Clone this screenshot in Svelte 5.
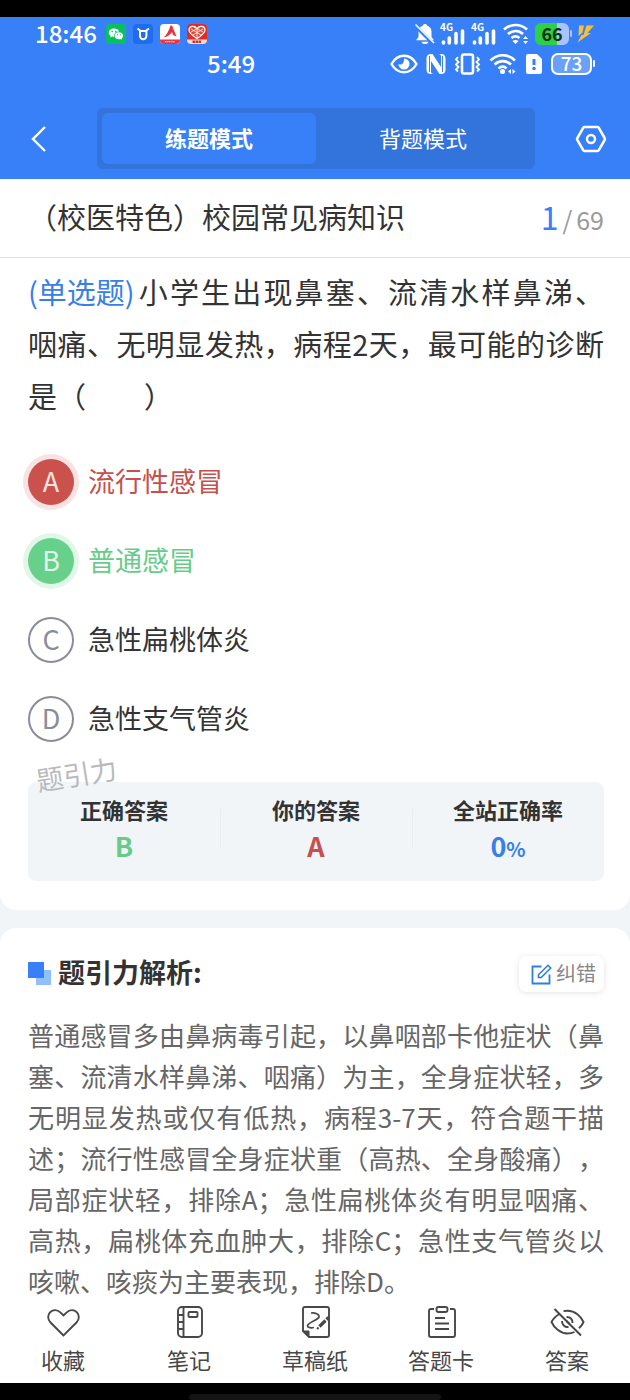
<script>
    let mode = 'practice';

    const title = '（校医特色）校园常见病知识';
    const question = ['小学生出现鼻塞、流清水样鼻涕、', '咽痛、无明显发热，病程2天，最可能的诊断', '是（　　）'];
    const options = [
        { key: 'A', text: '流行性感冒', state: 'wrong' },
        { key: 'B', text: '普通感冒', state: 'right' },
        { key: 'C', text: '急性扁桃体炎', state: '' },
        { key: 'D', text: '急性支气管炎', state: '' }
    ];
    const analysis = [
        '普通感冒多由鼻病毒引起，以鼻咽部卡他症状（鼻',
        '塞、流清水样鼻涕、咽痛）为主，全身症状轻，多',
        '无明显发热或仅有低热，病程3-7天，符合题干描',
        '述；流行性感冒全身症状重（高热、全身酸痛），',
        '局部症状轻，排除A；急性扁桃体炎有明显咽痛、',
        '高热，扁桃体充血肿大，排除C；急性支气管炎以',
        '咳嗽、咳痰为主要表现，排除D。'
    ];
    const tools = [
        { id: 'fav', text: '收藏' },
        { id: 'note', text: '笔记' },
        { id: 'draft', text: '草稿纸' },
        { id: 'card', text: '答题卡' },
        { id: 'answer', text: '答案' }
    ];
</script>

<div class="app">
    <header>
        <div class="notch"></div>
        <div class="status first">
            <span class="time">18:46</span>
            <div class="apps">
                <svg width="20" height="20" viewBox="0 0 20 20">
                    <rect width="20" height="20" rx="4" fill="#07c160" />
                    <path d="M8 4.500c-3 0-5.200 1.900-5.200 4.200 0 1.300.7 2.400 1.900 3.200l-.5 1.600 1.900-1c.6.200 1.200.3 1.900.3-.5-3 1.900-5.400 5.100-5.300C12.600 5.700 10.600 4.500 8 4.500z" fill="#fff" />
                    <path d="M12.900 8.200c-2.500 0-4.400 1.500-4.400 3.500s1.900 3.500 4.400 3.500c.5 0 1-.1 1.500-.2l1.500.8-.4-1.400c1-.7 1.600-1.600 1.600-2.700 0-2-1.900-3.500-4.200-3.500z" fill="#fff" />
                    <g fill="#07c160"><circle cx="6.300" cy="7.600" r=".8" /><circle cx="9.700" cy="7.600" r=".8" /><circle cx="11.500" cy="10.800" r=".6" /><circle cx="14.300" cy="10.800" r=".6" /></g>
                </svg>
                <svg width="20" height="20" viewBox="0 0 20 20">
                    <rect width="20" height="20" rx="4" fill="#1f6cf0" />
                    <path d="M4.500 4.500L7 6.500V12a3.200 3.200 0 0 0 6.400 0V6.500L16 4.500M7 7h6.400" fill="none" stroke="#fff" stroke-width="2" />
                </svg>
                <svg width="20" height="20" viewBox="0 0 20 20">
                    <rect width="20" height="20" rx="4" fill="#fff" />
                    <path d="M0 15.500h20V16a4 4 0 0 1-4 4H4a4 4 0 0 1-4-4z" fill="#ee3440" />
                    <path d="M3.500 13.500C7 11 9 6 10.500 1.500h1.500l4.500 11-3.500-1.500-1-3c-1.500 2.500-4.500 5-8.500 5.500z" fill="#e83442" />
                    <path d="M5 17.700h10" stroke="#fff" stroke-width="1" stroke-dasharray="1.500 .5" />
                </svg>
                <svg width="20" height="20" viewBox="0 0 20 20">
                    <rect width="20" height="20" rx="4" fill="#e52b20" />
                    <path d="M10 14.500C6 12 2 9.500 2 6c0-4 5.500-5 8-1.500C12.500 1 18 2 18 6c0 3.500-4 6-8 8.500z" fill="#e04a38" stroke="#fff" stroke-width="1.200" />
                    <path d="M4 5l10 6M7 3l9 5M16 5L6 11M13 3L4 8M10 4v10" stroke="#fff" stroke-width=".8" />
                    <path d="M0 15.500h20V16a4 4 0 0 1-4 4H4a4 4 0 0 1-4-4z" fill="#fbd9c8" />
                    <path d="M5.500 17.700h9" stroke="#c33" stroke-width="2.400" stroke-dasharray="2.500 .5" />
                </svg>
            </div>
            <div class="signals">
                <svg width="20" height="22" viewBox="0 0 20 22">
                    <path d="M10 1c-1 0-1.700.5-2 1.400C5.200 3.300 3.500 5.700 3.500 8.500V14L1 17.200h18L16.500 14V8.500c0-2.800-1.700-5.200-4.500-6.100C11.700 1.500 11 1 10 1zM6.500 18.700h7c-.5 1.600-1.700 2.300-3.500 2.300s-3-.7-3.500-2.300z" fill="#fff" />
                    <path d="M0 2.500L18.500 21" stroke="#3880f8" stroke-width="3.500" />
                    <path d="M.5 1.500L19 20" stroke="#fff" stroke-width="1.600" />
                </svg>
                {#each [1, 2] as sim}
                    <svg width="26" height="22" viewBox="0 0 26 22">
                        <text x="0" y="8" font-size="10" font-weight="700" fill="#fff">4G</text>
                        <path d="M3.500 20v-1M9.300 20v-5M16 20v-9.500M22.500 20V8" stroke="#fff" stroke-width="3.600" stroke-linecap="round" />
                    </svg>
                {/each}
                <svg width="28" height="22" viewBox="0 0 28 22">
                    <path d="M2 6.500c6.500-6 16.500-6 23 0M6 11c4.500-4 11-4 15 0M9.500 15c2.500-2 5.500-2 8 0" fill="none" stroke="#fff" stroke-width="2.600" />
                    <path d="M10.500 18c2-1.200 4-1.200 6 0l-3 3z" fill="#fff" />
                    <path d="M23.500 13l2.500 3h-5zM23.500 21l2.500-3h-5z" fill="#fff" />
                </svg>
                <span class="battery green">66</span>
                <svg width="18" height="20" viewBox="0 0 18 20">
                    <path d="M2 1.500h5l-1.500 7L1.500 12zM9.500 1.500H17L10.500 9h3.500L.5 18.500l4-7.500h2z" fill="#fbc02d" />
                </svg>
            </div>
        </div>
        <div class="status second">
            <span class="time">5:49</span>
            <div class="signals">
                <svg width="28" height="22" viewBox="0 0 28 22">
                    <path d="M1.500 11C7.500 0 20.500 0 26.500 11 20.500 22 7.500 22 1.500 11z" fill="none" stroke="#fff" stroke-width="2.400" />
                    <path d="M14 5.500a5.500 5.500 0 1 1-5.500 5.500c2 1.500 6 .5 5.500-5.500z" fill="#fff" />
                </svg>
                <svg width="20" height="22" viewBox="0 0 20 22">
                    <path d="M5 1h1.500L15 14V3.500C15 1.800 14 1 12.500 1H15c3 0 4.500 1.500 4.500 4.500v11c0 3-1.500 4.500-4.500 4.500h-1.500L5 8v10.500C5 20.200 6 21 7.500 21H5c-3 0-4.500-1.500-4.500-4.500v-11C.5 2.500 2 1 5 1z" fill="#fff" />
                    <path d="M3.500 3v16M16.500 3v16" stroke="#3880f8" stroke-width="1" />
                </svg>
                <svg width="27" height="22" viewBox="0 0 27 22">
                    <rect x="8" y="1.500" width="11" height="19" rx="2" fill="none" stroke="#fff" stroke-width="2.600" />
                    <path d="M4 4L2 6.500 4.500 9 2 11.500 4.500 14 2 16.500 4 18.500M23 4l2 2.500L22.500 9l2.500 2.500-2.500 2.500 2.500 2.500-2 2" fill="none" stroke="#fff" stroke-width="1.800" />
                </svg>
                <svg width="28" height="22" viewBox="0 0 28 22">
                    <path d="M1.500 7.500c7-7 17.500-7 24.500 0M5.500 11.500c5-4.500 11.500-4.500 16.500 0M9.500 15.500c3-2.500 5.500-2.500 8 0" fill="none" stroke="#fff" stroke-width="2.600" />
                    <circle cx="13.500" cy="18.500" r="2.500" fill="#fff" />
                    <path d="M19 18.500l3-2.500v5zM26.500 18.500l-3-2.500v5z" fill="#fff" />
                </svg>
                <svg width="18" height="22" viewBox="0 0 18 22">
                    <path d="M3 1h9l5 5v13a2 2 0 0 1-2 2H3a2 2 0 0 1-2-2V3a2 2 0 0 1 2-2z" fill="#fff" />
                    <path d="M9 6v6" stroke="#3880f8" stroke-width="3" />
                    <circle cx="9" cy="15.500" r="1.800" fill="#3880f8" />
                </svg>
                <span class="battery outline">73</span>
            </div>
        </div>
        <div class="bar">
            <button class="icon" aria-label="返回">
                <svg width="16" height="28" viewBox="0 0 16 28">
                    <path d="M14 2L2 14l12 12" fill="none" stroke="#fff" stroke-width="2.400" />
                </svg>
            </button>
            <div class="modes">
                <button class:active={mode == 'practice'} on:click={() => (mode = 'practice')}>练题模式</button>
                <button class:active={mode == 'recite'} on:click={() => (mode = 'recite')}>背题模式</button>
            </div>
            <button class="icon" aria-label="设置">
                <svg width="32" height="28" viewBox="0 0 32 28">
                    <path d="M9.500 2h13c.6 0 1 .3 1.300.8l5.900 10.400c.3.500.3 1.100 0 1.600l-5.900 10.400c-.3.500-.7.800-1.300.8h-13c-.6 0-1-.3-1.300-.8L2.300 14.800c-.3-.5-.3-1.100 0-1.600L8.200 2.800C8.500 2.300 8.900 2 9.500 2z" fill="none" stroke="#fff" stroke-width="2.600" />
                    <circle cx="16" cy="14" r="4" fill="none" stroke="#fff" stroke-width="2.400" />
                </svg>
            </button>
        </div>
    </header>

    <div class="heading">
        <h1>{title}</h1>
        <span class="count"><b>1</b><span>/</span>69</span>
    </div>

    <main>
        <section class="quiz">
            <div class="question">
                {#each question as line, i}
                    <p class:full={i < question.length - 1}>{#if i == 0}<span>(单选题)</span>{/if}{line}</p>
                {/each}
            </div>
            <div class="options">
                {#each options as option}
                    <button class="option {option.state}">
                        <span class="key">{option.key}</span>
                        <span class="text">{option.text}</span>
                    </button>
                {/each}
            </div>
            <div class="result">
                <span class="mark">题引力</span>
                <dl>
                    <div><dt>正确答案</dt><dd class="right">B</dd></div>
                    <div><dt>你的答案</dt><dd class="wrong">A</dd></div>
                    <div><dt>全站正确率</dt><dd class="rate">0<small>%</small></dd></div>
                </dl>
            </div>
        </section>

        <section class="analysis">
            <div class="top">
                <svg width="24" height="24" viewBox="0 0 24 24">
                    <rect x="8" y="8" width="15" height="15" fill="#8fc0fc" />
                    <rect width="16" height="16" fill="#3880f8" />
                </svg>
                <h2>题引力解析:</h2>
                <button class="fix">
                    <svg width="21" height="21" viewBox="0 0 21 21">
                        <path d="M10.500 2.500H1.500v17h17v-9" fill="none" stroke="#2f7fdc" stroke-width="1.800" />
                        <path d="M7.500 10.800L17 1.300l2.700 2.700-9.500 9.500H7.500z" fill="none" stroke="#2f7fdc" stroke-width="1.600" />
                    </svg>
                    <span class="text">纠错</span>
                </button>
            </div>
            {#each analysis as line, i}
                <p class:full={i < analysis.length - 1}>{line}</p>
            {/each}
        </section>
    </main>

    <nav>
        {#each tools as tool}
            <button>
                <svg width="36" height="34" viewBox="0 0 36 34" fill="none" stroke="#484848" stroke-width="1.900">
                    {#if tool.id == 'fav'}
                        <path d="M18.500 30.500L5.500 17.500c-3-3-3-7.500-.5-10.200 3-3 7.500-2.800 10.300 0l3.200 3.200 3.200-3.200c2.800-2.800 7.300-3 10.300 0 2.500 2.700 2.500 7.200-.5 10.200z" />
                    {:else if tool.id == 'note'}
                        <rect x="7" y="2" width="24" height="30" rx="4" />
                        <path d="M12.500 2v30M7 10h5.500M7 17h5.500M7 24h5.500" />
                        <rect x="17.500" y="7" width="9" height="5" rx="1" />
                    {:else if tool.id == 'draft'}
                        <path d="M12 32h18a2 2 0 0 0 2-2V4a2 2 0 0 0-2-2H8a2 2 0 0 0-2 2v22z" />
                        <path d="M6 26h6v6z" fill="#484848" stroke-width="1" />
                        <path d="M14 8c4-.5 8.500 1 8 4-.5 3-12 5.500-11.500 9 .4 2 4 2 6.500 1.500" stroke-width="1.700" />
                        <path d="M22.500 21.500l6-6M29.500 14.500l2-2" stroke-width="3.200" />
                        <path d="M20 24l1.500-1.500" />
                    {:else if tool.id == 'card'}
                        <path d="M11 4H8a2 2 0 0 0-2 2v24a2 2 0 0 0 2 2h22a2 2 0 0 0 2-2V6a2 2 0 0 0-2-2h-3" />
                        <rect x="13.500" y="2" width="11" height="5" rx="2" />
                        <path d="M12 13h10M12 18.500h14M12 24h14" />
                    {:else}
                        <path d="M10.500 9C7 11 4 14 2.500 17 5 22.500 11 28.500 18.500 28.500c2.500 0 5-.6 7-1.500M14.500 6.200c1.300-.4 2.600-.5 4-.5 7.500 0 13.500 5.500 16 11.300-1 2.300-2.500 4.300-4.500 6.200" />
                        <path d="M13 16c0 4 3 6.500 6.500 6M17.500 12c4 0 6 2.500 6 6M17.500 16l3 3" />
                        <path d="M5.500 4L32 30.500" />
                    {/if}
                </svg>
                {tool.text}
            </button>
        {/each}
    </nav>
    <div class="gesture"><i></i></div>
</div>

<style>
    :global(body) {
        margin: 0;
    }
    .app {
        display: flex;
        flex-direction: column;
        height: 100vh;
        background: #f2f5f8;
        color: #333;
        font-family: "Noto Sans CJK SC", "Noto Sans", sans-serif;
        text-spacing-trim: space-all;
    }
    button {
        border: 0;
        padding: 0;
        background: none;
        color: inherit;
        font: inherit;
        cursor: pointer;
    }
    svg {
        display: block;
        flex: none;
        overflow: visible;
    }
    h1, h2, p, dl, dd {
        margin: 0;
    }
    header {
        background: #3880f8;
        color: #fff;
    }
    .notch {
        height: 17px;
        background: #000;
    }
    .status {
        display: flex;
        align-items: center;
        padding-right: 35px;
    }
    .first {
        height: 34px;
        padding-left: 35px;
    }
    .second {
        height: 26px;
        padding-left: 207px;
    }
    .time {
        padding-bottom: 2px;
        font-size: 24px;
        font-weight: 500;
        line-height: 24px;
    }
    .apps {
        display: flex;
        gap: 7px;
        margin-left: 9px;
    }
    .signals {
        display: flex;
        align-items: center;
        gap: 5px;
        margin-left: auto;
    }
    .second .signals {
        gap: 8px;
    }
    .battery {
        box-sizing: border-box;
        position: relative;
        text-align: center;
        font-weight: 700;
    }
    .battery::after {
        content: "";
        position: absolute;
        top: 7px;
        right: -3px;
        width: 2px;
        height: 7px;
        border-radius: 1px;
        background: #fff;
    }
    .green {
        width: 34px;
        height: 22px;
        margin-right: 3px;
        border-radius: 6px;
        background: linear-gradient(to right, #2fd044 66%, #a5c5fb 66%);
        color: #14301c;
        font-size: 18px;
        line-height: 20px;
    }
    .green::after {
        background: #a5c5fb;
    }
    .outline {
        width: 41px;
        height: 22px;
        margin-right: 3px;
        border: 2px solid #fff;
        border-radius: 7px;
        background: #6aa0fa;
        font-size: 19px;
        font-weight: 500;
        line-height: 16px;
    }
    .outline::after {
        top: 5px;
        right: -5px;
    }
    .bar {
        display: flex;
        align-items: center;
        padding: 31px 23px 10px 31px;
    }
    .modes {
        display: flex;
        flex: 1;
        margin: 0 40px 0 50px;
        padding: 5px;
        border-radius: 6px;
        background: #3274dc;
    }
    .modes button {
        flex: 1;
        height: 51px;
        padding-bottom: 4px;
        border-radius: 6px;
        font-size: 22px;
    }
    .modes .active {
        background: #3880f8;
        font-weight: 700;
    }
    .heading {
        display: flex;
        align-items: center;
        justify-content: space-between;
        box-sizing: border-box;
        height: 79px;
        padding: 0 26px 4px 28px;
        border-bottom: 1px solid #e4e4e4;
        background: #fff;
    }
    h1 {
        font-size: 29px;
        font-weight: 400;
    }
    .count {
        color: #999;
        font-size: 25px;
    }
    .count span {
        margin: 0 4px;
    }
    .count b {
        color: #3880f8;
        font-size: 32px;
        font-weight: 400;
    }
    main {
        flex: 1;
        min-height: 0;
        overflow-y: auto;
        scrollbar-width: none;
    }
    .quiz {
        padding: 7px 26px 29px 28px;
        border-radius: 0 0 16px 16px;
        background: #fff;
    }
    .question p {
        font-size: 29px;
        line-height: 52px;
        white-space: nowrap;
    }
    .question span {
        display: inline-block;
        margin-right: 2px;
        color: #3880e8;
        text-align-last: left;
    }
    p.full {
        text-align: justify;
        text-align-last: justify;
    }
    .options {
        margin-top: 21px;
    }
    .option {
        display: flex;
        align-items: center;
        gap: 14px;
        width: 100%;
        height: 79px;
        font-size: 27px;
    }
    .text {
        padding-bottom: 3px;
    }
    .key {
        box-sizing: border-box;
        width: 46px;
        height: 46px;
        border: 2px solid #8a8c9c;
        border-radius: 50%;
        color: #8a8c9c;
        line-height: 40px;
        text-align: center;
    }
    .option.wrong .key,
    .option.right .key {
        border: 0;
        line-height: 44px;
    }
    .option.wrong .key {
        background: #cb514d;
        box-shadow: 0 0 0 5px #f8e3e2;
        color: #f8e3e2;
    }
    .option.right .key {
        background: #67d08a;
        box-shadow: 0 0 0 5px #e1f8e9;
        color: #e1f8e9;
    }
    .wrong {
        color: #c5504d;
    }
    .right {
        color: #67cc89;
    }
    .rate {
        color: #3880e8;
    }
    .result {
        position: relative;
        margin-top: 24px;
    }
    .mark {
        position: absolute;
        top: -28px;
        left: 8px;
        color: #b8babc;
        font-size: 27px;
        line-height: 40px;
        transform: rotate(-9deg);
    }
    dl {
        display: flex;
        padding: 10px 0 15px;
        border-radius: 8px;
        background: #f2f5f8;
    }
    dl div {
        flex: 1;
        text-align: center;
    }
    dl div + div {
        background: linear-gradient(#e9edf1, #e9edf1) left / 1px 40px no-repeat;
    }
    dt {
        font-size: 22px;
        font-weight: 700;
        line-height: 34px;
    }
    dd {
        height: 40px;
        font-size: 27px;
        font-weight: 700;
        line-height: 40px;
    }
    dd small {
        font-size: 20px;
        line-height: 20px;
    }
    .analysis {
        margin-top: 18px;
        padding: 26px 26px 20px 28px;
        border-radius: 16px 16px 0 0;
        background: #fff;
    }
    .top {
        display: flex;
        align-items: center;
        gap: 6px;
        margin-bottom: 20px;
    }
    h2 {
        padding-bottom: 4px;
        font-size: 27px;
        line-height: 36px;
    }
    .fix {
        display: flex;
        align-items: center;
        gap: 4px;
        height: 36px;
        margin-left: auto;
        padding: 0 8px 0 12px;
        border-radius: 8px;
        box-shadow: 0 1px 6px #0000001c;
        color: #888;
        font-size: 20px;
    }
    .analysis p {
        color: #666;
        font-size: 26px;
        line-height: 41px;
        white-space: nowrap;
    }
    nav {
        display: flex;
        background: #fff;
        color: #484848;
    }
    nav button {
        display: flex;
        flex: 1;
        flex-direction: column;
        align-items: center;
        gap: 4px;
        padding: 3px 0 8px;
        font-size: 22px;
        line-height: 32px;
    }
    .gesture {
        display: flex;
        align-items: flex-end;
        justify-content: center;
        height: 17px;
        background: #000;
    }
    .gesture i {
        width: 40%;
        height: 6px;
        border-radius: 3px;
        background: #141414;
    }
</style>
